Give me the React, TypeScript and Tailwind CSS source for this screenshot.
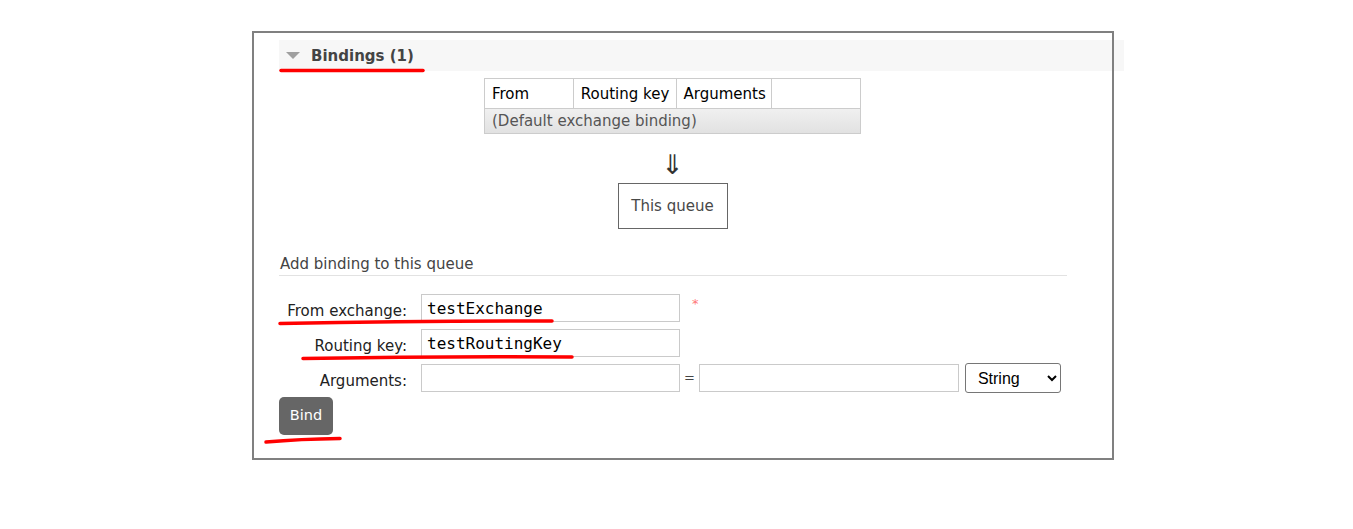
import React from 'react';

const sans = "font-['DejaVu_Sans',Verdana,sans-serif]";
const mono = "font-['DejaVu_Sans_Mono',monospace]";

const FormRow: React.FC<{ label: string; children: React.ReactNode }> = ({ label, children }) => (
  <div className="flex items-center h-[28px]">
    <label className="w-[128px] text-right pt-[6px] pr-[14px] box-content text-[15px] text-[#222]">{label}</label>
    {children}
  </div>
);

const Field: React.FC<{ value?: string; width?: string }> = ({ value = '', width = 'w-[259px]' }) => (
  <input
    readOnly
    value={value}
    className={`${width} h-[28px] border border-[#cacaca] bg-white px-[5px] text-[16px] text-black ${mono}`}
  />
);

export default function App() {
  return (
    <div className={`relative w-full h-[529px] bg-white overflow-hidden ${sans}`}>
      <div className="pl-[279px] pt-[40px]">
        <div className="w-[845px]">
          {/* Section header */}
          <div className="h-[31px] bg-[#f7f7f7] flex items-center pl-[7px] gap-[11px]">
            <svg width="14" height="8" viewBox="0 0 14 8">
              <polygon points="0,0 14,0 7,7" fill="#a0a0a0" />
            </svg>
            <span className="pt-[1px] text-[15px] font-bold text-[#444]">Bindings (1)</span>
          </div>

          {/* Binding table + diagram */}
          <div className="ml-[205px] w-[377px] mt-[7px] flex flex-col items-center">
            <table className="w-[377px] border-collapse text-[15px]">
              <thead>
                <tr className="h-[30px] bg-white">
                  <th className="w-[89px] border border-[#ccc] text-left font-normal pl-[7px] pt-[1px] text-black">From</th>
                  <th className="w-[103px] border border-[#ccc] text-left font-normal pl-[7px] pt-[1px] text-black">Routing key</th>
                  <th className="w-[96px] border border-[#ccc] text-left font-normal pl-[7px] pt-[1px] text-black">Arguments</th>
                  <th className="w-[89px] border border-[#ccc]"></th>
                </tr>
              </thead>
              <tbody>
                <tr className="h-[25px] bg-linear-to-b from-[#f0f0f0] to-[#e1e1e1]">
                  <td colSpan={4} className="border border-[#ccc] pl-[7px] text-[#555]">(Default exchange binding)</td>
                </tr>
              </tbody>
            </table>
            <div className="mt-[16px] text-[27px] leading-[30px] text-[#333]">⇓</div>
            <div className="mt-[3px] w-[110px] h-[46px] border border-[#666] flex items-center justify-center text-[15px] text-[#484848]">
              This queue
            </div>
          </div>

          {/* Add binding form */}
          <div className="w-[788px] mt-[25px] border-b border-[#e2e2e2] pb-[1px] pl-[1px] text-[15px] leading-[20px] text-[#444]">
            Add binding to this queue
          </div>

          <div className="mt-[18px] flex flex-col gap-[7px]">
            <FormRow label="From exchange:">
              <Field value="testExchange" />
              <span className="ml-[12px] -mt-[8px] text-[13px] text-[#f77]">*</span>
            </FormRow>
            <FormRow label="Routing key:">
              <Field value="testRoutingKey" />
            </FormRow>
            <FormRow label="Arguments:">
              <Field />
              <span className="mx-[4px] text-[13px] text-[#444]">=</span>
              <Field width="w-[260px]" />
              <select
                defaultValue="String"
                className="ml-[6px] w-[96px] h-[30px] border border-[#767676] rounded-[3px] bg-white pl-[8px] text-[16px] text-black font-['Liberation_Sans',Arial,sans-serif]"
              >
                <option>String</option>
                <option>Number</option>
                <option>Boolean</option>
                <option>List</option>
              </select>
            </FormRow>
          </div>

          <button className="mt-[5px] w-[54px] h-[38px] rounded-[5px] bg-[#666] text-white text-[14.5px]">Bind</button>
        </div>
      </div>

      {/* Annotation frame */}
      <div className="absolute left-[252px] top-[31px] w-[862px] h-[429px] border-2 border-[#808080] pointer-events-none" />

      {/* Red annotation marks */}
      <svg className="absolute inset-0 pointer-events-none" width="1353" height="529">
        <g stroke="#f00" strokeWidth="3.5" strokeLinecap="round" fill="none">
          <path d="M281 70.5 L423 70.5" />
          <path d="M280 323.5 Q420 321 552 321" />
          <path d="M303 358.5 Q440 356 572 357" />
          <path d="M266 442 Q300 439 340 438.5" />
        </g>
      </svg>
    </div>
  );
}
